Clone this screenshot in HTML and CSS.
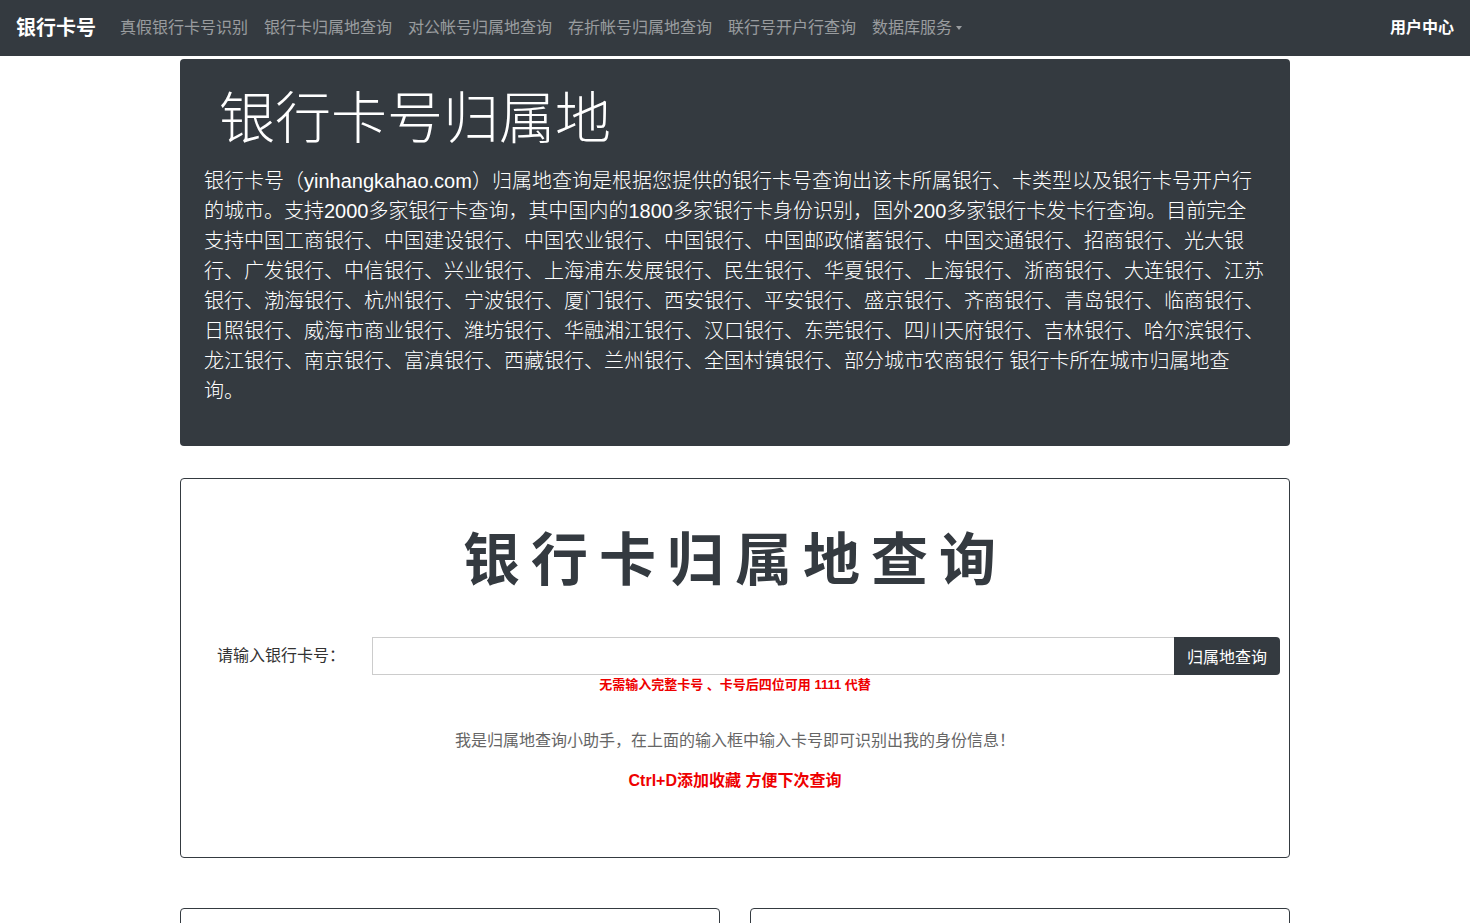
FILE: index.html
```html
<!DOCTYPE html>
<html lang="zh-CN">
<head>
  <meta charset="UTF-8">
  <meta name="viewport" content="width=device-width, initial-scale=1.0">
  <title>银行卡号归属地查询</title>
  <link rel="stylesheet" href="styles.css">
</head>
<body>
  <nav class="navbar">
    <a class="brand" href="#">银行卡号</a>
    <ul class="nav-links">
      <li><a href="#">真假银行卡号识别</a></li>
      <li><a href="#">银行卡归属地查询</a></li>
      <li><a href="#">对公帐号归属地查询</a></li>
      <li><a href="#">存折帐号归属地查询</a></li>
      <li><a href="#">联行号开户行查询</a></li>
      <li><a href="#" class="dropdown">数据库服务</a></li>
    </ul>
    <a class="user-link" href="#">用户中心</a>
  </nav>

  <div class="container">
    <div class="jumbotron">
      <h1>银行卡号归属地</h1>
      <p>银行卡号（yinhangkahao.com）归属地查询是根据您提供的银行卡号查询出该卡所属银行、卡类型以及银行卡号开户行的城市。支持2000多家银行卡查询，其中国内的1800多家银行卡身份识别，国外200多家银行卡发卡行查询。目前完全支持中国工商银行、中国建设银行、中国农业银行、中国银行、中国邮政储蓄银行、中国交通银行、招商银行、光大银行、广发银行、中信银行、兴业银行、上海浦东发展银行、民生银行、华夏银行、上海银行、浙商银行、大连银行、江苏银行、渤海银行、杭州银行、宁波银行、厦门银行、西安银行、平安银行、盛京银行、齐商银行、青岛银行、临商银行、日照银行、威海市商业银行、潍坊银行、华融湘江银行、汉口银行、东莞银行、四川天府银行、吉林银行、哈尔滨银行、龙江银行、南京银行、富滇银行、西藏银行、兰州银行、全国村镇银行、部分城市农商银行 银行卡所在城市归属地查询。</p>
    </div>

    <div class="query-card">
      <h2 class="query-title">银行卡归属地查询</h2>
      <form class="query-form">
        <label for="cardno">请输入银行卡号：</label>
        <input type="text" id="cardno" class="query-input">
        <button type="button" class="query-btn">归属地查询</button>
      </form>
      <div class="hint">无需输入完整卡号 、卡号后四位可用 1111 代替</div>
      <p class="helper">我是归属地查询小助手，在上面的输入框中输入卡号即可识别出我的身份信息！</p>
      <p class="bookmark">Ctrl+D添加收藏 方便下次查询</p>
    </div>

    <div class="bottom-row">
      <div class="panel"></div>
      <div class="panel"></div>
    </div>
  </div>
</body>
</html>
```

FILE: styles.css
```css
body {
  margin: 0;
  font-family: "Liberation Sans", "Noto Sans CJK SC", sans-serif;
  font-size: 16px;
  line-height: 1.5;
  color: #212529;
  background: #fff;
}

a { text-decoration: none; }

/* top navigation */
.navbar {
  display: flex;
  align-items: center;
  height: 56px;
  padding: 0 16px;
  background-color: #343a40;
  box-sizing: border-box;
}

.brand {
  font-size: 20px;
  font-weight: bold;
  color: #fff;
  margin-right: 16px;
}

.nav-links {
  display: flex;
  list-style: none;
  margin: 0;
  padding: 0;
  flex: 1;
}

.nav-links a {
  display: block;
  padding: 8px;
  color: rgba(255, 255, 255, 0.5);
}

.dropdown::after {
  content: "";
  display: inline-block;
  margin-left: 4px;
  vertical-align: 3px;
  border-top: 4px solid;
  border-left: 3.5px solid transparent;
  border-right: 3.5px solid transparent;
}

.user-link {
  color: #fff;
  font-weight: bold;
}

.container {
  width: 1110px;
  margin: 0 auto;
}

/* intro block */
.jumbotron {
  margin-top: 3px;
  padding: 26px 24px 24px;
  background-color: #343a40;
  border-radius: 4px;
  color: #fff;
}

.jumbotron h1 {
  margin: 0 0 14px;
  padding-left: 15px;
  font-size: 56px;
  font-weight: 300;
  line-height: 1.2;
}

.jumbotron p {
  margin: 0 0 16px;
  font-size: 20px;
  font-weight: 300;
  line-height: 30px;
}

/* query card */
.query-card {
  margin-top: 32px;
  border: 1px solid #343a40;
  border-radius: 4px;
  padding: 47px 9px 64px 0;
  text-align: center;
}

.query-title {
  margin: 0 0 42px;
  font-size: 57px;
  font-weight: bold;
  line-height: 1.2;
  letter-spacing: 11px;
  color: #343a40;
  padding-left: 9px;
}

.query-form {
  display: flex;
  align-items: center;
  margin: 0;
}

.query-form label {
  flex: none;
  width: 191px;
  box-sizing: border-box;
  padding-left: 36px;
  text-align: left;
  white-space: nowrap;
  color: #333;
}

.query-input {
  flex: 1;
  min-width: 0;
  height: 38px;
  box-sizing: border-box;
  border: 1px solid #ccc;
  border-right: 0;
  padding: 6px 12px;
  font-size: 16px;
  outline: none;
}

.query-btn {
  flex: none;
  width: 106px;
  height: 38px;
  border: 0;
  border-radius: 0 4px 4px 0;
  background-color: #343a40;
  color: #fff;
  font-family: inherit;
  font-size: 16px;
}

.hint {
  margin-top: 2px;
  padding-left: 9px;
  font-size: 13px;
  font-weight: bold;
  line-height: 16px;
  color: #e00;
}

.helper {
  margin: 36px 0 0;
  padding-left: 9px;
  color: #666;
}

.bookmark {
  margin: 16px 0 0;
  padding-left: 9px;
  font-weight: bold;
  color: #e00;
}

.bottom-row {
  display: flex;
  gap: 30px;
  margin-top: 50px;
}

.panel {
  flex: 1;
  height: 200px;
  border: 1px solid #343a40;
  border-radius: 4px;
}
```
